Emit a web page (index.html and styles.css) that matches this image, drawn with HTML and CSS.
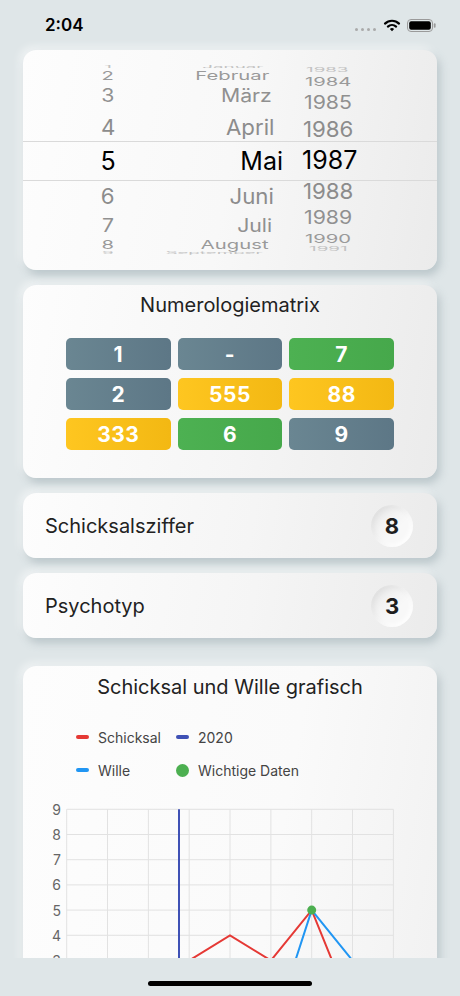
FILE: index.html
```html
<!DOCTYPE html>
<html>
<head>
	<meta charset="utf-8">
	<link rel="stylesheet" href="styles.css">
</head>
<body>

	<div class="status">
		<span class="time">2:04</span>
		<div class="dots"><i></i><i></i><i></i><i></i></div>
		<svg class="wifi" width="18" height="14" viewBox="0 0 18 14">
			<path d="M2 5.6 A10 10 0 0 1 16 5.6" fill="none" stroke="#000" stroke-width="2.2" stroke-linecap="round"/>
			<path d="M4.9 8.6 A6 6 0 0 1 13.1 8.6" fill="none" stroke="#000" stroke-width="2.2" stroke-linecap="round"/>
			<path d="M9 13.2 L6.9 11.1 A3 3 0 0 1 11.1 11.1 Z" fill="#000"/>
		</svg>
		<svg class="battery" width="30" height="13" viewBox="0 0 30 13">
			<rect x="0.5" y="0.5" width="25" height="12" rx="3.5" fill="none" stroke="#9a9a9a"/>
			<rect x="2.2" y="2.2" width="21.6" height="8.6" rx="2" fill="#000"/>
			<rect x="26.8" y="4.3" width="1.8" height="4.4" rx="0.9" fill="#9a9a9a"/>
		</svg>
	</div>

	<div class="content">

		<!-- date wheel -->
		<div class="card picker">
			<div class="wheel">
				<div class="col dm day">
					<div class="it u4"><span>1</span></div>
					<div class="it u3"><span>2</span></div>
					<div class="it u2"><span>3</span></div>
					<div class="it u1"><span>4</span></div>
					<div class="it sel"><span>5</span></div>
					<div class="it d1"><span>6</span></div>
					<div class="it d2"><span>7</span></div>
					<div class="it d3"><span>8</span></div>
					<div class="it d4"><span>9</span></div>
				</div>
				<div class="col dm month">
					<div class="it u4"><span>Januar</span></div>
					<div class="it u3"><span>Februar</span></div>
					<div class="it u2"><span>März</span></div>
					<div class="it u1"><span>April</span></div>
					<div class="it sel"><span>Mai</span></div>
					<div class="it d1"><span>Juni</span></div>
					<div class="it d2"><span>Juli</span></div>
					<div class="it d3"><span>August</span></div>
					<div class="it d4"><span>September</span></div>
				</div>
				<div class="col year">
					<div class="it u4"><span>1983</span></div>
					<div class="it u3"><span>1984</span></div>
					<div class="it u2"><span>1985</span></div>
					<div class="it u1"><span>1986</span></div>
					<div class="it sel"><span>1987</span></div>
					<div class="it d1"><span>1988</span></div>
					<div class="it d2"><span>1989</span></div>
					<div class="it d3"><span>1990</span></div>
					<div class="it d4"><span>1991</span></div>
				</div>
			</div>
			<div class="band"></div>
		</div>

		<div class="card matrix">
			<h2 class="cardtitle">Numerologiematrix</h2>
			<div class="cells">
				<div class="cell slate">1</div>
				<div class="cell slate">-</div>
				<div class="cell green">7</div>
				<div class="cell slate">2</div>
				<div class="cell amber">555</div>
				<div class="cell amber">88</div>
				<div class="cell amber">333</div>
				<div class="cell green">6</div>
				<div class="cell slate">9</div>
			</div>
		</div>

		<div class="card row">
			<span class="rowlabel">Schicksalsziffer</span>
			<span class="badge">8</span>
		</div>

		<div class="card row last">
			<span class="rowlabel">Psychotyp</span>
			<span class="badge">3</span>
		</div>

		<div class="card graph">
			<h2 class="cardtitle">Schicksal und Wille grafisch</h2>
			<div class="legend">
				<div class="key"><i class="dash red"></i>Schicksal</div>
				<div class="key"><i class="dash indigo"></i>2020</div>
				<div class="key"><i class="dash blue"></i>Wille</div>
				<div class="key"><i class="dot"></i>Wichtige Daten</div>
			</div>
			<svg class="chart" width="414" height="240" viewBox="0 0 414 240">
				<g stroke="#e2e2e2" stroke-width="1">
					<line x1="43.7" y1="14.3" x2="370.4" y2="14.3"/>
					<line x1="43.7" y1="39.5" x2="370.4" y2="39.5"/>
					<line x1="43.7" y1="64.7" x2="370.4" y2="64.7"/>
					<line x1="43.7" y1="89.9" x2="370.4" y2="89.9"/>
					<line x1="43.7" y1="115.1" x2="370.4" y2="115.1"/>
					<line x1="43.7" y1="140.3" x2="370.4" y2="140.3"/>
					<line x1="43.7" y1="165.5" x2="370.4" y2="165.5"/>
					<line x1="43.7" y1="190.7" x2="370.4" y2="190.7"/>
					<line x1="43.7" y1="215.9" x2="370.4" y2="215.9"/>
					<line x1="43.7" y1="14.3" x2="43.7" y2="240"/>
					<line x1="84.5" y1="14.3" x2="84.5" y2="240"/>
					<line x1="125.4" y1="14.3" x2="125.4" y2="240"/>
					<line x1="166.2" y1="14.3" x2="166.2" y2="240"/>
					<line x1="207" y1="14.3" x2="207" y2="240"/>
					<line x1="247.9" y1="14.3" x2="247.9" y2="240"/>
					<line x1="288.7" y1="14.3" x2="288.7" y2="240"/>
					<line x1="329.5" y1="14.3" x2="329.5" y2="240"/>
					<line x1="370.4" y1="14.3" x2="370.4" y2="240"/>
				</g>
				<g class="ylabels" text-anchor="end" dominant-baseline="central">
					<text x="38" y="14.3">9</text>
					<text x="38" y="39.5">8</text>
					<text x="38" y="64.7">7</text>
					<text x="38" y="89.9">6</text>
					<text x="38" y="115.1">5</text>
					<text x="38" y="140.3">4</text>
					<text x="38" y="165.5">3</text>
				</g>
				<line x1="156" y1="14.3" x2="156" y2="240" stroke="#3f51b5" stroke-width="2"/>
				<polyline points="125.4,215.9 166.2,165.5 207,140.3 247.9,165.5 288.7,115.1 329.5,215.9 370.4,190.7" fill="none" stroke="#e53935" stroke-width="2"/>
				<polyline points="207,241 247.9,241 288.7,115.1 329.5,165.5 370.4,215.9" fill="none" stroke="#2196f3" stroke-width="2"/>
				<circle cx="288.7" cy="115.1" r="4.5" fill="#4caf50"/>
			</svg>
		</div>

	</div>

	<div class="home"><div class="indicator"></div></div>

</body>
</html>
```

FILE: styles.css
```css
html, body {
	margin: 0;
	padding: 0;
}

body {
	width: 460px;
	height: 996px;
	overflow: hidden;
	background: #dfe6e8;
	font-family: "Inter", "Liberation Sans", sans-serif;
	color: #222;
}

/* status bar */
.status {
	height: 40px;
	box-sizing: border-box;
	padding: 10px 23px 0 45px;
	display: flex;
	align-items: center;
}

.time {
	font-size: 17px;
	font-weight: 600;
	margin-right: auto;
	color: #000;
}

.dots {
	display: flex;
	gap: 3px;
	height: 12px;
	align-items: flex-end;
	margin-right: 7px;
}

.dots i {
	width: 3px;
	height: 3px;
	border-radius: 50%;
	background: #aaa;
}

.wifi { display: block; margin-right: 6px; }
.battery { display: block; }

/* scroll area */
.content {
	height: 918px;
	box-sizing: border-box;
	padding: 10px 23px 0;
	overflow: hidden;
}

.card {
	position: relative;
	border-radius: 13px;
	background: linear-gradient(100deg, #fdfdfd 0%, #f5f5f5 55%, #ebebeb 100%);
	box-shadow: 3px 5px 8px rgba(140, 158, 164, 0.45), -3px -3px 8px rgba(255, 255, 255, 0.6);
	margin-bottom: 15px;
}

.cardtitle {
	margin: 0;
	font-size: 20px;
	font-weight: 400;
	line-height: 24px;
	text-align: center;
	color: #222;
}

/* date wheel */
.picker {
	height: 220px;
	box-sizing: border-box;
	padding-top: 12px;
	background: linear-gradient(100deg, #fdfdfd 0%, #f8f8f8 50%, #ebebeb 100%);
}

.wheel {
	display: flex;
}

.col {
	display: flex;
	flex-direction: column;
}

.it {
	display: flex;
	align-items: center;
	white-space: nowrap;
	font-size: 25px;
	color: #8c8c8c;
}

.it span {
	display: inline-block;
	line-height: 30px;
}

.day { width: 170px; }
.day .it { justify-content: center; }

.month { width: 90px; }
.month .it { justify-content: flex-end; }
.month .it span { transform-origin: right center; }

.year { margin-left: 19px; padding-top: 2px; }
.year .it span { transform-origin: left center; }

.dm .u4 { height: 9px; }
.dm .u3 { height: 9px; }
.dm .u2 { height: 32px; }
.dm .u1 { height: 29px; }
.dm .sel { height: 40px; }
.dm .d1 { height: 30px; }
.dm .d2 { height: 30px; }
.dm .d3 { height: 8px; }
.dm .d4 { height: 8px; }

.year .u4 { height: 12px; }
.year .u3 { height: 11px; }
.year .u2 { height: 31px; }
.year .u1 { height: 21px; }
.year .sel { height: 42px; }
.year .d1 { height: 20px; }
.year .d2 { height: 34px; }
.year .d3 { height: 7px; }
.year .d4 { height: 14px; }

.sel { color: #000; }
.u1 span, .d1 span { transform: scale(0.89, 0.85); }
.u2 span, .d2 span { transform: scale(0.85, 0.72); color: #909090; }
.u3 span, .d3 span { transform: scale(0.81, 0.48); color: #9a9a9a; }
.u4 span, .d4 span { transform: scale(0.75, 0.14); color: #c2c2c2; }

.month .u1, .month .d1 { padding-right: 9px; }
.month .u2, .month .d2 { padding-right: 11px; }
.month .u3, .month .d3 { padding-right: 14px; }
.month .u4, .month .d4 { padding-right: 20px; }

.year .u1, .year .d1 { padding-left: 1px; }
.year .u2, .year .d2 { padding-left: 2px; }
.year .u3, .year .d3 { padding-left: 3px; }
.year .u4 { padding-left: 4px; }
.year .d4 { padding-left: 7px; }

.year .u4 span, .year .d4 span { transform: scale(0.75, 0.22); }

.band {
	position: absolute;
	left: 0;
	right: 0;
	top: 91px;
	height: 38px;
	border-top: 1px solid #dadada;
	border-bottom: 1px solid #dadada;
	pointer-events: none;
}

/* numerology matrix */
.matrix {
	padding: 8px 43px 28px;
}

.matrix .cardtitle { margin-bottom: 21px; }

.cells {
	display: grid;
	grid-template-columns: repeat(3, 1fr);
	column-gap: 7px;
	row-gap: 8px;
}

.cell {
	height: 32px;
	border-radius: 5px;
	display: flex;
	align-items: center;
	justify-content: center;
	color: #fff;
	font-size: 21px;
	font-weight: 700;
	letter-spacing: 0.5px;
}

.slate { background: linear-gradient(to right, #6a8692, #5d7786); }
.green { background: linear-gradient(to right, #4db152, #46a84b); }
.amber { background: linear-gradient(to right, #fec620, #f3b813); }

/* value rows */
.row {
	height: 65px;
	box-sizing: border-box;
	padding: 0 24px 0 22px;
	display: flex;
	align-items: center;
	justify-content: space-between;
}

.row.last { margin-bottom: 28px; }

.rowlabel {
	font-size: 20px;
	color: #222;
}

.badge {
	width: 42px;
	height: 42px;
	border-radius: 50%;
	display: flex;
	align-items: center;
	justify-content: center;
	font-size: 22px;
	font-weight: 700;
	color: #1e1e1e;
	background: linear-gradient(135deg, #e9e9e9, #f8f8f8 60%);
	box-shadow: inset 3px 3px 6px rgba(0, 0, 0, 0.06), inset -2px -2px 5px rgba(255, 255, 255, 0.9);
}

/* chart */
.graph {
	padding-top: 9px;
	background: linear-gradient(100deg, #fdfdfd 0%, #fafafa 60%, #f1f1f1 100%);
}

.legend {
	margin-top: 28px;
	padding-left: 53px;
	display: grid;
	grid-template-columns: 100px auto;
	row-gap: 13px;
}

.key {
	height: 20px;
	display: flex;
	align-items: center;
	font-size: 14px;
	color: #444;
}

.dash, .dot {
	width: 13px;
	margin-right: 9px;
	flex: none;
}

.dash {
	height: 4px;
	border-radius: 2px;
}

.dot {
	height: 13px;
	border-radius: 50%;
	background: #4caf50;
}

.red { background: #e53935; }
.indigo { background: #3f51b5; }
.blue { background: #2196f3; }

.chart {
	display: block;
	margin-top: 15px;
}

.ylabels {
	font-size: 14px;
	fill: #666;
}

/* home indicator */
.home {
	height: 38px;
	display: flex;
	justify-content: center;
}

.indicator {
	margin-top: 23px;
	width: 164px;
	height: 5px;
	border-radius: 3px;
	background: #000;
}
```
